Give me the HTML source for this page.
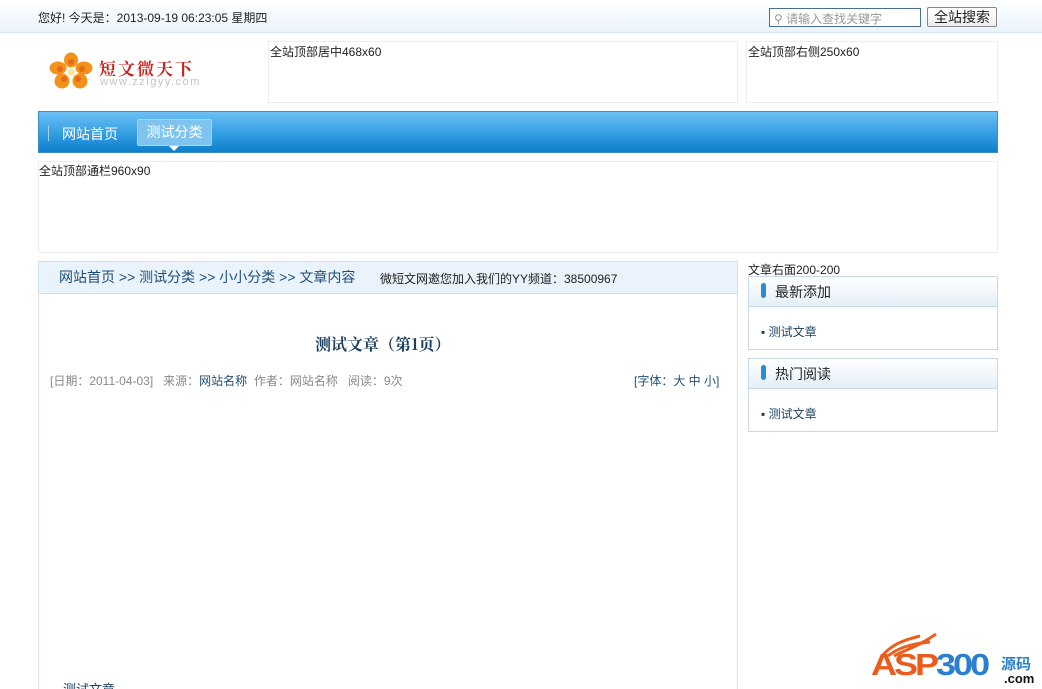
<!DOCTYPE html>
<html><head><meta charset="utf-8"><style>
*{margin:0;padding:0;box-sizing:border-box}
html,body{width:1042px;height:689px;overflow:hidden}
body{background:#fff;font-family:"Liberation Sans","Noto Sans CJK SC",sans-serif;font-size:12px;color:#333;position:relative}
.a{position:absolute;white-space:nowrap}
</style></head><body>
<div class="a" style="left:0;top:0;width:1042px;height:33px;background:linear-gradient(#fff,#eaf3fb);border-bottom:1px solid #d6e6f3"></div>
<div class="a" style="left:38px;top:9px;font-size:12px;color:#222">您好! 今天是：2013-09-19 06:23:05 星期四</div>
<div class="a" style="left:769px;top:8px;width:152px;height:19px;border:1px solid #4a6f8a;background:#fff;color:#999;font-size:12px;padding:1px 0 0 4px">⚲ 请输入查找关键字</div>
<div class="a" style="left:927px;top:7px;width:70px;height:20px;border:1px solid #888;border-radius:2px;background:linear-gradient(#fff,#eee);font-size:14px;text-align:center;line-height:18px;color:#222">全站搜索</div>
<!-- logo -->
<svg class="a" style="left:49px;top:52px" width="44" height="38" viewBox="0 0 44 38">
<g fill="#f2921a"><ellipse cx="22" cy="8" rx="7" ry="7.5"/><ellipse cx="9" cy="16" rx="8.5" ry="6.5"/><ellipse cx="35" cy="16" rx="8.5" ry="6.5"/><ellipse cx="13" cy="29" rx="7.5" ry="7.5"/><ellipse cx="31" cy="29" rx="7.5" ry="7.5"/></g>
<g fill="#e2501a" opacity=".6"><circle cx="22" cy="10" r="3"/><circle cx="11" cy="17" r="3"/><circle cx="33" cy="17" r="3"/><circle cx="15" cy="27" r="3"/><circle cx="29" cy="27" r="3"/></g>
<circle cx="22" cy="20" r="3.5" fill="#fce3a0"/></svg>
<div class="a" style="left:99px;top:55px;font-size:17px;font-weight:bold;color:#c8231c;letter-spacing:2px;font-family:'Noto Serif CJK SC',serif">短文微天下</div>
<div class="a" style="left:100px;top:76px;font-size:11px;color:#c4c4c4;letter-spacing:1.5px">www.zzlgyy.com</div>
<div class="a" style="left:268px;top:41px;width:470px;height:62px;border:1px solid #eee;padding:1px 0 0 1px;color:#222">全站顶部居中468x60</div>
<div class="a" style="left:746px;top:41px;width:252px;height:62px;border:1px solid #eee;padding:1px 0 0 1px;color:#222">全站顶部右侧250x60</div>
<!-- nav -->
<div class="a" style="left:38px;top:111px;width:960px;height:42px;background:linear-gradient(#6cc0f5,#2e9ae0 60%,#0e7fcc);border:1px solid #3b8fc8"></div>
<div class="a" style="left:48px;top:125px;width:1px;height:16px;background:#9fd4f6"></div>
<div class="a" style="left:62px;top:124px;font-size:14px;color:#fff">网站首页</div>
<div class="a" style="left:137px;top:119px;width:75px;height:27px;background:#7ec4ef;border-radius:2px;border:1px solid #9fd5f5;font-size:14px;color:#fff;text-align:center;line-height:25px">测试分类</div>
<div class="a" style="left:169px;top:146px;width:0;height:0;border-left:5px solid transparent;border-right:5px solid transparent;border-top:5px solid #fff"></div>
<div class="a" style="left:38px;top:161px;width:960px;height:92px;border:1px solid #eee;color:#222">全站顶部通栏960x90</div>
<!-- main -->
<div class="a" style="left:38px;top:261px;width:700px;height:428px;border:1px solid #d6e3ec;border-top:none;border-bottom:none"></div>
<div class="a" style="left:38px;top:261px;width:700px;height:33px;background:#eaf3fb;border:1px solid #cfe0ee"></div>
<div class="a" style="left:59px;top:267px;font-size:14px;color:#1d4d77">网站首页 &gt;&gt; 测试分类 &gt;&gt; 小小分类 &gt;&gt; 文章内容</div>
<div class="a" style="left:380px;top:270px;font-size:12px;color:#222">微短文网邀您加入我们的YY频道：38500967</div>
<div class="a" style="left:315px;top:332px;font-size:16px;font-weight:bold;color:#1d3f5e;font-family:'Noto Serif CJK SC',serif">测试文章（第1页）</div>
<div class="a" style="left:50px;top:372px;color:#888">[日期：2011-04-03] &nbsp; 来源：<span style="color:#1d4d77">网站名称</span> &nbsp;作者：网站名称 &nbsp; 阅读：9次</div>
<div class="a" style="left:634px;top:372px;color:#1d4d77">[字体：大 中 小]</div>
<div class="a" style="left:63px;top:679px;font-size:13px;color:#1d3f5e">测试文章</div>
<!-- sidebar -->
<div class="a" style="left:748px;top:261px;color:#222">文章右面200-200</div>
<div class="a" style="left:748px;top:276px;width:250px;height:74px;border:1px solid #c8d9e6"></div>
<div class="a" style="left:748px;top:276px;width:250px;height:31px;background:linear-gradient(#fff,#e4eff8);border:1px solid #c8d9e6"></div>
<div class="a" style="left:761px;top:283px;width:5px;height:15px;border-radius:3px;background:#2a8ad4"></div>
<div class="a" style="left:775px;top:282px;font-size:14px;color:#222">最新添加</div>
<div class="a" style="left:761px;top:323px;color:#1d3f5e">▪ 测试文章</div>
<div class="a" style="left:748px;top:358px;width:250px;height:74px;border:1px solid #c8d9e6"></div>
<div class="a" style="left:748px;top:358px;width:250px;height:31px;background:linear-gradient(#fff,#e4eff8);border:1px solid #c8d9e6"></div>
<div class="a" style="left:761px;top:365px;width:5px;height:15px;border-radius:3px;background:#2a8ad4"></div>
<div class="a" style="left:775px;top:364px;font-size:14px;color:#222">热门阅读</div>
<div class="a" style="left:761px;top:405px;color:#1d3f5e">▪ 测试文章</div>
<!-- asp300 logo -->
<svg class="a" style="left:880px;top:632px" width="60" height="26" viewBox="0 0 60 26">
<path d="M2 24 C12 12 24 8 40 4 M8 24 C18 16 30 12 50 10 M14 24 C24 18 36 16 56 2" stroke="#e8601c" stroke-width="3" fill="none"/></svg>
<div class="a" style="left:871px;top:647px;font-size:36px;font-weight:900;color:#ec5a1c;letter-spacing:-3px;transform:scaleY(.85);transform-origin:left top">ASP<span style="color:#2a7fd0">300</span></div>
<div class="a" style="left:1001px;top:653px;font-size:15px;font-weight:bold;color:#2a7fd0">源码</div>
<div class="a" style="left:1004px;top:671px;font-size:13px;font-weight:bold;color:#111">.com</div>
</body></html>
